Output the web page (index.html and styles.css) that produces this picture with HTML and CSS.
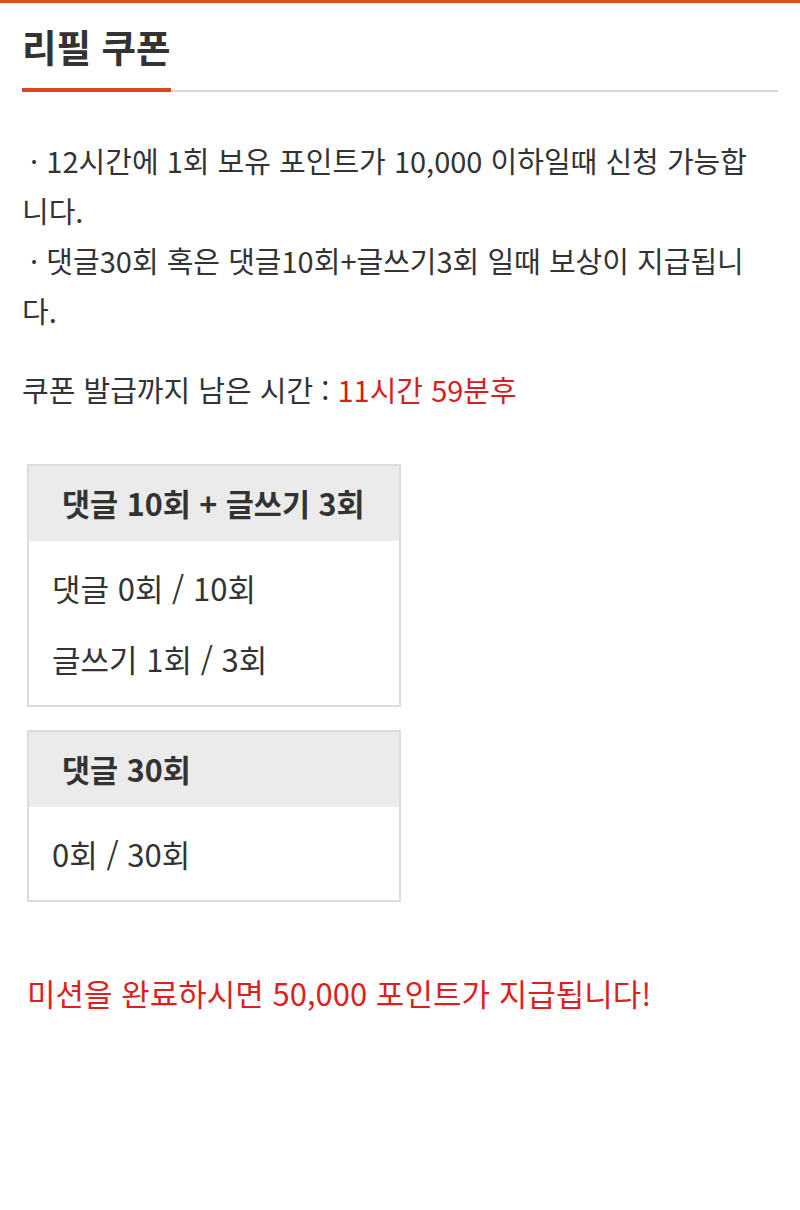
FILE: index.html
```html
<!DOCTYPE html>
<html lang="ko">
<head>
    <meta charset="UTF-8">
    <meta name="viewport" content="width=device-width, initial-scale=1.0">
    <title>리필 쿠폰</title>
    <link rel="stylesheet" href="styles.css">
</head>
<body>
    <div class="top-line"></div>
    <div class="page">
        <div class="title-bar">
            <h2 class="title">리필 쿠폰</h2>
        </div>

        <p class="notice">&nbsp;· 12시간에 1회 보유 포인트가 10,000 이하일때 신청 가능합니다.<br>&nbsp;· 댓글30회 혹은 댓글10회+글쓰기3회 일때 보상이 지급됩니다.</p>

        <p class="timer">쿠폰 발급까지 남은 시간 : <span class="red">11시간 59분후</span></p>

        <div class="mission">
            <div class="mission-head">댓글 10회 + 글쓰기 3회</div>
            <div class="mission-body">
                <div>댓글 0회 / 10회</div>
                <div>글쓰기 1회 / 3회</div>
            </div>
        </div>

        <div class="mission">
            <div class="mission-head">댓글 30회</div>
            <div class="mission-body">
                <div>0회 / 30회</div>
            </div>
        </div>

        <p class="reward">미션을 완료하시면 50,000 포인트가 지급됩니다!</p>
    </div>
</body>
</html>
```

FILE: styles.css
```css
/* Global */
body {
    margin: 0;
    background: #fff;
    color: #333;
    font-family: "Noto Sans CJK KR", "Noto Sans", sans-serif;
}

.top-line {
    height: 3px;
    background: #e04a22;
}

.page {
    padding: 0 22px;
}

/* Title */
.title-bar {
    display: flex;
    border-bottom: 2px solid #d6d6d6;
    margin-top: 17px;
}

.title {
    margin: 0 0 -2px 0;
    padding-bottom: 16px;
    font-size: 37.5px;
    line-height: 52px;
    font-weight: 700;
    color: #333;
    border-bottom: 4px solid #d9461f;
}

/* Notice text */
.notice {
    margin: 43px 0 0 0;
    padding-right: 12px;
    font-size: 29px;
    line-height: 50px;
}

.timer {
    margin: 29px 0 0 0;
    font-size: 29px;
    line-height: 50px;
}

.red {
    color: #d81e1e;
}

/* Mission boxes */
.mission {
    width: 370px;
    margin: 50px 0 0 5px;
    border: 2px solid #dcdcdc;
}

.mission + .mission {
    margin-top: 23px;
}

.mission-head {
    height: 75px;
    line-height: 75px;
    padding-left: 33px;
    background: #ebebeb;
    font-size: 30.5px;
    font-weight: 700;
}

.mission-body {
    padding: 11px 23px 11px;
    font-size: 31px;
    line-height: 71px;
}

.reward {
    margin: 66px 0 0 5px;
    font-size: 31px;
    line-height: 50px;
    color: #dd1f1f;
}
```
